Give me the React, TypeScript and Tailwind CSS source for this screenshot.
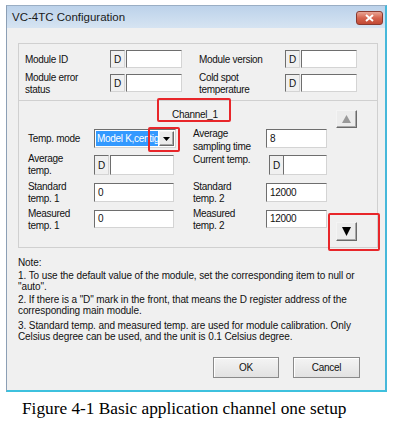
import React from "react";

const sunken =
  "border border-t-[#6e6e6e] border-l-[#6e6e6e] border-r-[#d4d4d4] border-b-[#d4d4d4]";
const raised =
  "border border-t-[#f4f4f4] border-l-[#f4f4f4] border-r-[#6a6a6a] border-b-[#6a6a6a] bg-[#ececec] shadow-[inset_-1px_-1px_0_#a8a8a8]";

function DBox() {
  return (
    <div className={`w-[15px] h-full bg-[#f0f0f0] ${sunken} flex items-center pl-[3px] text-[10px]`}>D</div>
  );
}

function Input({ w, value }: { w: string; value?: string }) {
  return (
    <div className={`${w} h-full bg-white ${sunken} flex items-center pl-[3px] text-[10px] leading-none`}>
      {value}
    </div>
  );
}

function Label({ lines, w }: { lines: string[]; w: string }) {
  return (
    <div className={`${w} -mt-[2px] leading-[12px] text-[10px]`}>
      {lines.map((l, i) => (
        <div key={i}>{l}</div>
      ))}
    </div>
  );
}

export default function App() {
  return (
    <div className="w-[394px] h-[425px] bg-white relative overflow-hidden font-['Liberation_Sans',Arial,sans-serif] text-[#111] tracking-[-0.3px]">
      <div className="ml-[6px] mt-[5px] w-[381px] h-[387px] flex flex-col border-l border-l-[#8c9fb5] border-t border-t-[#9aaec4] border-r-2 border-r-[#46b8da] border-b-2 border-b-[#3dc1de] bg-[#f0f0f0]">
        {/* title bar */}
        <div className="h-[22px] flex items-center justify-between bg-gradient-to-b from-[#bcd2ea] to-[#d6e4f2] pl-[5px] pr-[2px]">
          <span className="text-[11.5px] tracking-normal text-[#1a1a1a] pt-[1px]">VC-4TC Configuration</span>
          <div className="w-[27px] h-[14px] mt-[2px] rounded-[3px] border border-[#8a3a30] bg-gradient-to-b from-[#e8a595] via-[#d5644f] to-[#c24a35] flex items-center justify-center">
            <svg width="9" height="8" viewBox="0 0 9 8">
              <path d="M1 1 L8 7 M8 1 L1 7" stroke="#fff" strokeWidth="2" />
            </svg>
          </div>
        </div>

        {/* client */}
        <div className="flex-1 flex flex-col pl-[11px]">
          {/* group 1 */}
          <div className="mt-[15px] w-[360px] border-t border-x border-[#d0d0d0] pt-[6px] pb-[8px] pl-[6px] flex flex-col gap-[6px]">
            <div className="h-[18px] flex items-stretch">
              <div className="w-[85px] text-[10px] flex items-center">Module ID</div>
              <DBox />
              <div className="w-[1px]" />
              <Input w="w-[56px]" />
              <div className="w-[17px]" />
              <div className="w-[86px] text-[10px] flex items-center">Module version</div>
              <DBox />
              <div className="w-[1px]" />
              <Input w="w-[56px]" />
            </div>
            <div className="h-[18px] flex items-stretch">
              <Label lines={["Module error", "status"]} w="w-[85px]" />
              <DBox />
              <div className="w-[1px]" />
              <Input w="w-[56px]" />
              <div className="w-[17px]" />
              <Label lines={["Cold spot", "temperature"]} w="w-[86px]" />
              <DBox />
              <div className="w-[1px]" />
              <Input w="w-[56px]" />
            </div>
          </div>

          {/* group 2 */}
          <div className="w-[360px] h-[148px] border border-[#d0d0d0] flex">
            <div className="flex flex-col">
              <div className="h-[28px] pt-[8px] pl-[153px] text-[10px] leading-[12px]">Channel_1</div>
              <div className="pl-[9px] flex flex-col">
                {/* row 1 */}
                <div className="h-[19px] flex items-stretch">
                  <div className="w-[66px] text-[10px] flex items-center">Temp. mode</div>
                  <div className={`w-[82px] h-full bg-white ${sunken} flex items-center p-[1px] gap-[1px]`}>
                    <div className="w-[63px] h-[15px] bg-[#3399ff] text-white text-[10px] overflow-hidden whitespace-nowrap flex items-center pl-[1px]">
                      Model K,centig
                    </div>
                    <div className={`w-[15px] h-[15px] ${raised} flex items-center justify-center`}>
                      <svg width="7" height="4" viewBox="0 0 7 4">
                        <path d="M0 0 L7 0 L3.5 4 Z" fill="#000" />
                      </svg>
                    </div>
                  </div>
                  <div className="w-[17px]" />
                  <div className="w-[73px] -mt-[2px] leading-[13px] text-[10px]">
                    <div>Average</div>
                    <div>sampling time</div>
                  </div>
                  <Input w="w-[61px]" value="8" />
                </div>
                {/* row 2 */}
                <div className="h-[20px] mt-[7px] flex items-stretch">
                  <Label lines={["Average", "temp."]} w="w-[66px]" />
                  <div className="w-[15px]"><DBox /></div>
                  <div className="w-[1px]" />
                  <Input w="w-[64px]" />
                  <div className="w-[19px]" />
                  <div className="w-[76px] -mt-[1px] text-[10px] leading-[12px]">Current temp.</div>
                  <div className="w-[14px]"><DBox /></div>
                  <Input w="w-[44px]" />
                </div>
                {/* row 3 */}
                <div className="h-[19px] mt-[8px] flex items-stretch">
                  <Label lines={["Standard", "temp. 1"]} w="w-[66px]" />
                  <Input w="w-[80px]" value="0" />
                  <div className="w-[19px]" />
                  <Label lines={["Standard", "temp. 2"]} w="w-[73px]" />
                  <Input w="w-[61px]" value="12000" />
                </div>
                {/* row 4 */}
                <div className="h-[18px] mt-[8px] flex items-stretch">
                  <Label lines={["Measured", "temp. 1"]} w="w-[66px]" />
                  <Input w="w-[80px]" value="0" />
                  <div className="w-[19px]" />
                  <Label lines={["Measured", "temp. 2"]} w="w-[73px]" />
                  <Input w="w-[61px]" value="12000" />
                </div>
              </div>
            </div>
            <div className="ml-[9px] flex flex-col justify-between pt-[9px] pb-[6px]">
              <div className={`w-[21px] h-[18px] ${raised} flex items-center justify-center`}>
                <svg width="9" height="8" viewBox="0 0 9 8">
                  <path d="M0 8 L9 8 L4.5 0 Z" fill="#9a9a9a" />
                </svg>
              </div>
              <div className={`w-[21px] h-[19px] ${raised} flex items-center justify-center`}>
                <svg width="9" height="9" viewBox="0 0 9 9">
                  <path d="M0 0 L9 0 L4.5 9 Z" fill="#000" />
                </svg>
              </div>
            </div>
          </div>

          {/* notes */}
          <div className="mt-[9px] text-[10px] leading-[11px] whitespace-nowrap tracking-[-0.1px]">
            <div>Note:</div>
            <div className="mt-[2px]">
              1. To use the default value of the module, set the corresponding item to null or
              <br />
              "auto".
            </div>
            <div className="mt-[2px]">
              2. If there is a "D" mark in the front, that means the D register address of the
              <br />
              corresponding main module.
            </div>
            <div className="mt-[4px]">
              3. Standard temp. and measured temp. are used for module calibration. Only
              <br />
              Celsius degree can be used, and the unit is 0.1 Celsius degree.
            </div>
          </div>

          {/* buttons */}
          <div className="mt-[15px] flex justify-end gap-[14px] pr-[25px]">
            <div className="w-[66px] h-[21px] border border-[#8a8a8a] bg-gradient-to-b from-[#f4f4f4] to-[#e2e2e2] shadow-[inset_1px_1px_0_#fff] flex items-center justify-center text-[10px]">
              OK
            </div>
            <div className="w-[67px] h-[21px] border border-[#8a8a8a] bg-gradient-to-b from-[#f4f4f4] to-[#e2e2e2] shadow-[inset_1px_1px_0_#fff] flex items-center justify-center text-[10px]">
              Cancel
            </div>
          </div>
        </div>
      </div>

      {/* caption */}
      <div className="mt-[7px] pl-[22px] font-['Liberation_Serif','Times_New_Roman',serif] text-[17.3px] leading-[19px] tracking-normal text-black whitespace-nowrap">
        Figure 4-1 Basic application channel one setup
      </div>

      {/* red highlight boxes */}
      <div className="absolute left-[157px] top-[98px] w-[74px] h-[24px] border-2 border-[#e8262a] rounded-[2px]" />
      <div className="absolute left-[148px] top-[127px] w-[32px] h-[25px] border-2 border-[#e8262a] rounded-[2px]" />
      <div className="absolute left-[328px] top-[213px] w-[52px] h-[38px] border-2 border-[#e8262a] rounded-[2px]" />
    </div>
  );
}
